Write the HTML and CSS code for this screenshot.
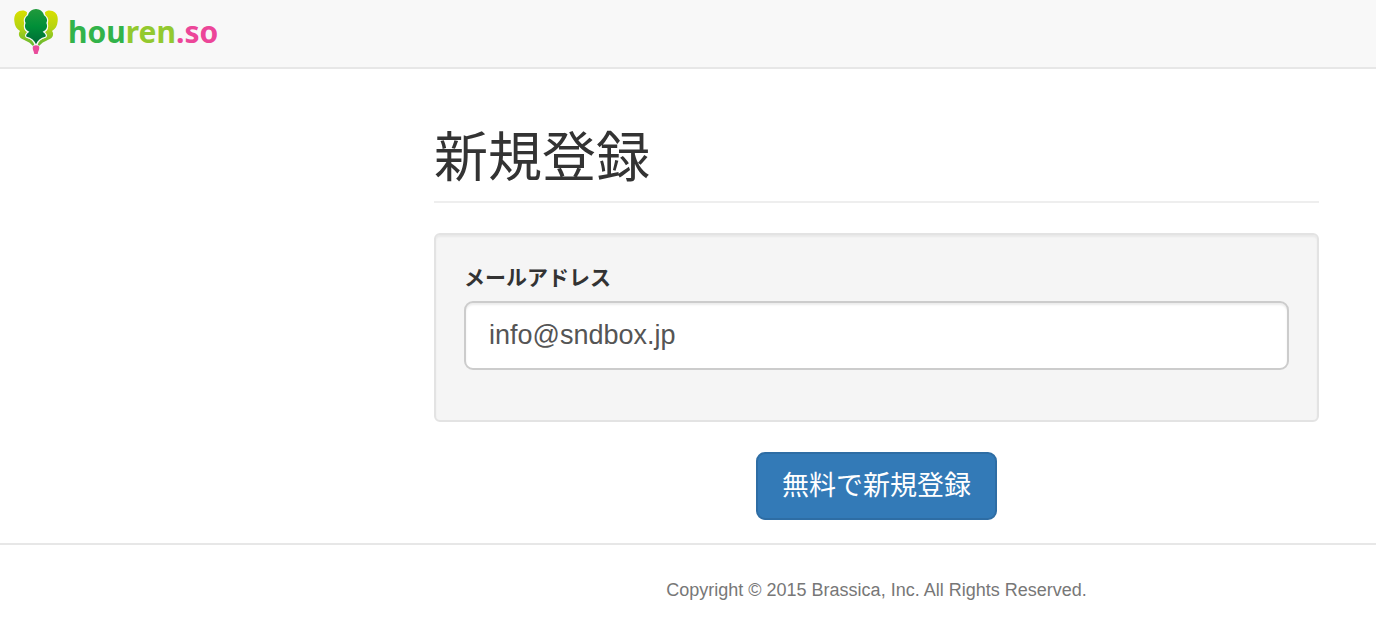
FILE: index.html
```html
<!DOCTYPE html>
<html lang="ja">
<head>
<meta charset="utf-8">
<meta name="viewport" content="width=device-width, initial-scale=1">
<title>新規登録 | houren.so</title>
<link rel="stylesheet" href="styles.css">
</head>
<body>
<header class="navbar">
  <a class="brand" href="#">
    <svg class="brand-mark" viewBox="18 15 130 135" aria-hidden="true">
      <defs>
        <linearGradient id="outer" x1="0" y1="0" x2="0" y2="1">
          <stop offset="0" stop-color="#d9df00"/>
          <stop offset="0.5" stop-color="#b4d313"/>
          <stop offset="1" stop-color="#64b832"/>
        </linearGradient>
        <linearGradient id="inner" x1="0" y1="0" x2="0" y2="1">
          <stop offset="0" stop-color="#219a3c"/>
          <stop offset="0.5" stop-color="#008f38"/>
          <stop offset="1" stop-color="#006b36"/>
        </linearGradient>
      </defs>
      <path fill="url(#outer)" d="M56 25C48 16 34 19 25 26C18 32 17 43 18 52C19 66 25 76 35 81C31 86 31 91 33 97C37 105 45 107 52 110C61 113 67 118 73 125L78 123C76 112 68 105 57 102C50 98 50 92 57 85C48 80 45 72 49 61C45 53 47 43 55 36Z"/>
      <path fill="url(#outer)" transform="translate(166 0) scale(-1 1)" d="M56 25C48 16 34 19 25 26C18 32 17 43 18 52C19 66 25 76 35 81C31 86 31 91 33 97C37 105 45 107 52 110C61 113 67 118 73 125L78 123C76 112 68 105 57 102C50 98 50 92 57 85C48 80 45 72 49 61C45 53 47 43 55 36Z"/>
      <path fill="url(#inner)" stroke="#f8f8f8" stroke-width="7" paint-order="stroke" d="M83 15C72 16 61 22 59 34C51 40 47 48 52 57C47 68 51 79 63 83C56 88 51 94 55 98C69 101 79 109 83 121C87 109 97 101 111 98C115 94 110 88 103 83C115 79 119 68 114 57C119 48 115 40 107 34C105 22 94 16 83 15Z"/>
      <path fill="#e94b9b" d="M74 127Q83 121 92 127C95 136 89 142 88 150H78C77 142 71 136 74 127Z"/>
    </svg>
    <span class="brand-name"><span class="dark">hou</span><span class="lime">ren</span><span class="pink">.so</span></span>
  </a>
</header>
<main class="content">
  <h1 class="page-title">新規登録</h1>
  <form class="signup">
    <div class="well">
      <label class="field-label" for="email">メールアドレス</label>
      <input class="field" id="email" name="email" type="email" value="info@sndbox.jp">
    </div>
    <button class="submit" type="submit">無料で新規登録</button>
  </form>
</main>
<footer class="footer">
  <p class="copyright">Copyright © 2015 Brassica, Inc. All Rights Reserved.</p>
</footer>
</body>
</html>
```
FILE: styles.css
```css
* { box-sizing: border-box; }

body {
  margin: 0;
  background: #fff;
  color: #333;
  font-family: "Liberation Sans", "Noto Sans CJK JP", sans-serif;
  font-size: 21px;
  line-height: 30px;
}

.navbar {
  padding: 9px 14px 12px;
  background: #f8f8f8;
  border-bottom: 2px solid #e7e7e7;
}

.brand {
  display: inline-flex;
  align-items: flex-start;
  gap: 10px;
  vertical-align: top;
  text-decoration: none;
}

.brand-mark { width: 44px; height: 45px; }

.brand-name {
  font-family: "Noto Sans", sans-serif;
  font-size: 30px;
  font-weight: 700;
  line-height: 46px;
}

.dark { color: #32b34a; }
.lime { color: #93c92f; }
.pink { color: #ec4699; }

.content,
.footer {
  padding-left: 434px;
  padding-right: 57px;
}

.page-title {
  margin: 0 0 30px;
  padding: 59px 0 13px;
  border-bottom: 2px solid #eee;
  font-size: 54px;
  font-weight: 400;
  line-height: 60px;
}

.signup {
  display: flex;
  flex-direction: column;
  align-items: center;
  gap: 30px;
}

.well {
  width: 100%;
  padding: 28px 28px 50px;
  background: #f5f5f5;
  border: 2px solid #e3e3e3;
  border-radius: 6px;
  box-shadow: inset 0 2px 2px rgba(0, 0, 0, 0.05);
}

.field-label {
  display: block;
  margin-bottom: 8px;
  font-weight: 700;
}

.field {
  display: block;
  width: 100%;
  height: 69px;
  padding: 0 23px;
  background: #fff;
  border: 2px solid #ccc;
  border-radius: 9px;
  box-shadow: inset 0 2px 2px rgba(0, 0, 0, 0.075);
  color: #555;
  font-family: inherit;
  font-size: 27px;
}

.submit {
  padding: 14px 24px;
  background: #337ab7;
  border: 2px solid #2e6da4;
  border-radius: 9px;
  color: #fff;
  font-family: inherit;
  font-size: 27px;
  font-weight: 400;
  line-height: 36px;
}

.footer {
  margin-top: 23px;
  padding-top: 30px;
  padding-bottom: 17px;
  border-top: 2px solid #e7e7e7;
}

.copyright {
  margin: 0;
  color: #777;
  font-size: 18px;
  text-align: center;
}
```
